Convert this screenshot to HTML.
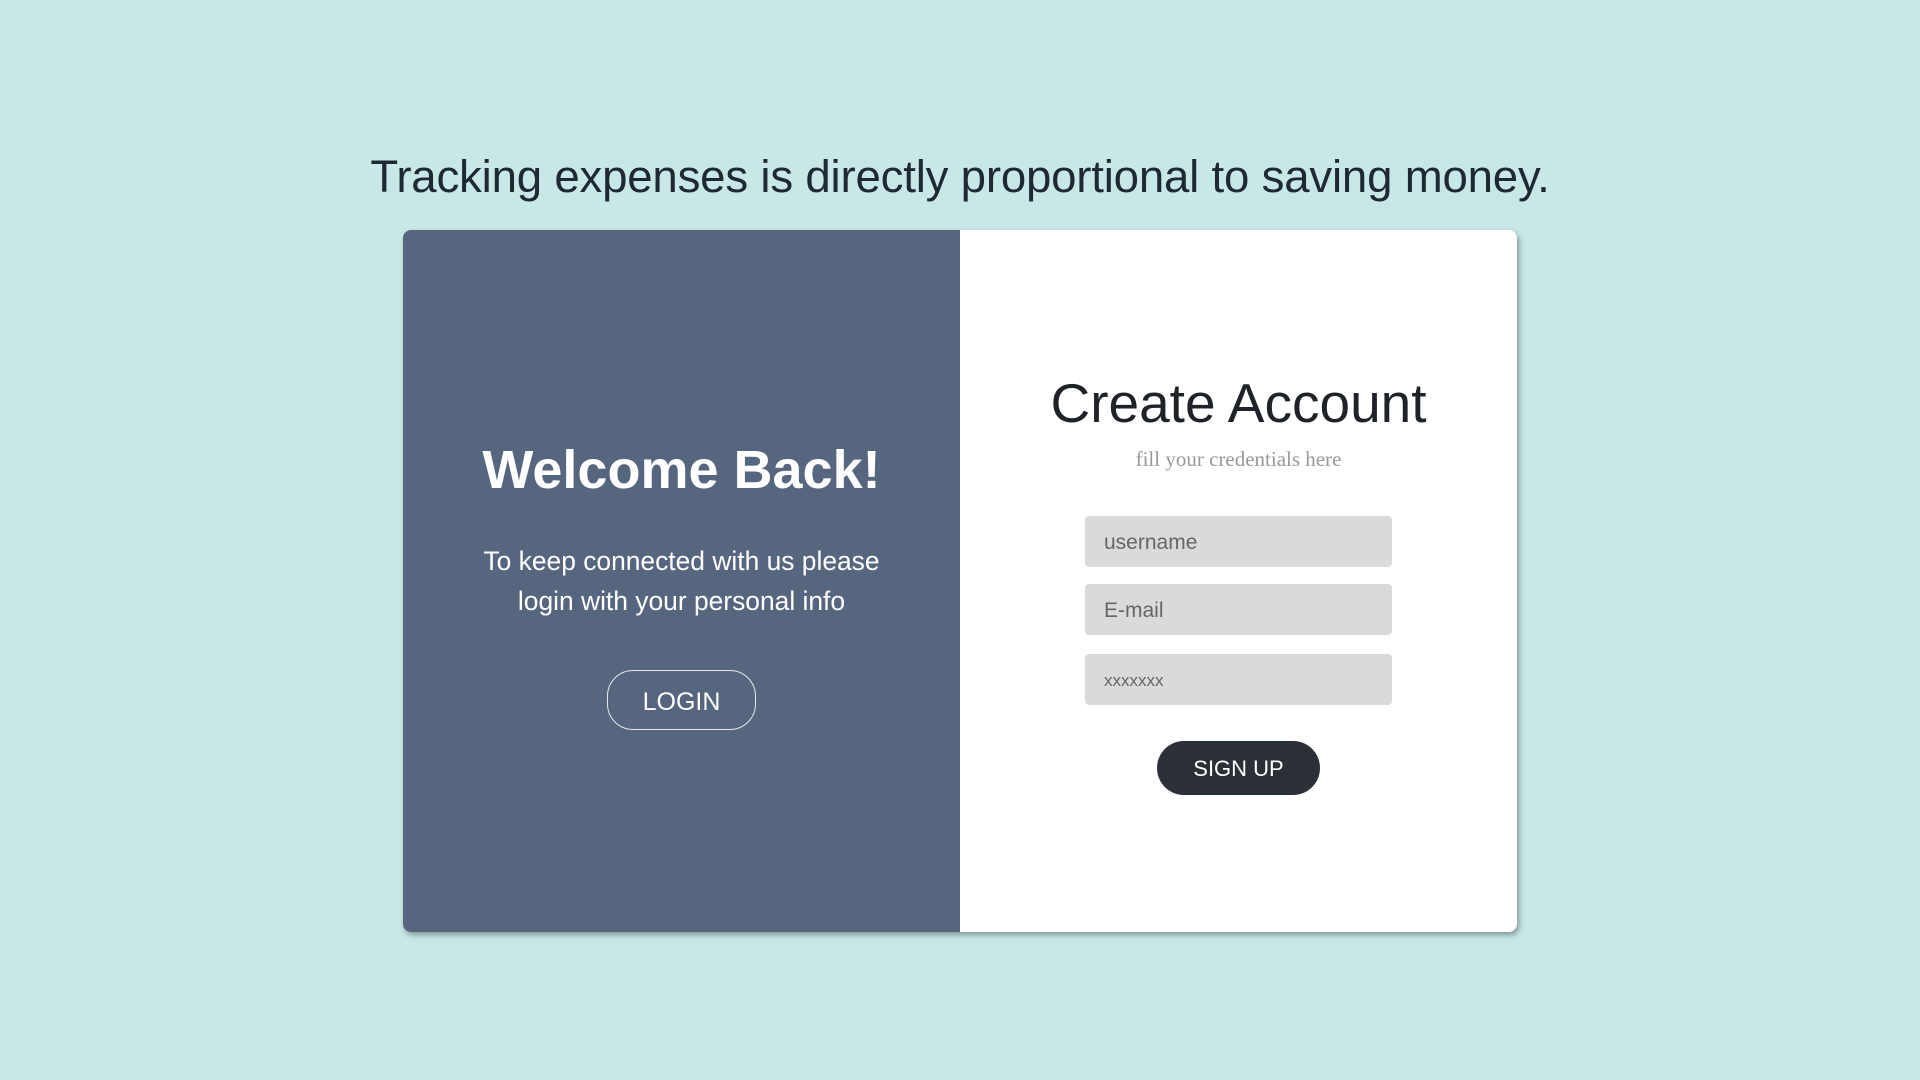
<!DOCTYPE html>
<html><head><meta charset="utf-8"><style>
html,body{margin:0;padding:0;width:1920px;height:1080px;background:#c8e8e8;font-family:"Liberation Sans","DejaVu Sans",sans-serif;overflow:hidden}
h1{position:absolute;top:150px;left:0;width:1920px;margin:0;text-align:center;font-size:45.6px;font-weight:normal;color:#1f2933;line-height:54px;letter-spacing:-0.2px}
.card{position:absolute;left:403px;top:230px;width:1114px;height:702px;border-radius:8px;background:#fff;box-shadow:2px 3px 6px rgba(0,0,0,0.35);overflow:hidden}
.left{position:absolute;left:0;top:0;width:557px;height:702px;background:#57667f;color:#fff;text-align:center}
.left h2{position:absolute;top:205px;left:0;width:557px;margin:0;font-size:54px;font-weight:bold;line-height:70px}
.left p{position:absolute;top:311px;left:0;width:557px;margin:0;font-size:26.4px;line-height:40px}
.login{position:absolute;left:204px;top:440px;width:147px;height:58px;border:1px solid #e6e8ee;border-radius:26px;font-size:25px;line-height:62px;color:#fff}
.right{position:absolute;left:557px;top:0;width:557px;height:702px;text-align:center}
.right h3{position:absolute;top:141px;left:0;width:557px;margin:0;font-size:55px;font-weight:normal;color:#1f2328;line-height:64px}
.sub{position:absolute;top:217px;left:0;width:557px;font-family:"Liberation Serif",serif;font-size:21px;color:#999}
.in{position:absolute;left:125px;width:307px;height:51px;background:#dadada;border-radius:4px;text-align:left;box-sizing:border-box;padding-left:19px;font-size:21px;line-height:53px;color:#666}
.btn{position:absolute;left:197px;top:511px;width:163px;height:54px;border-radius:27px;background:#2b2f36;color:#fff;font-size:22px;line-height:56px}
</style></head><body>
<h1>Tracking expenses is directly proportional to saving money.</h1>
<div class="card">
<div class="left">
<h2>Welcome Back!</h2>
<p>To keep connected with us please<br>login with your personal info</p>
<div class="login">LOGIN</div>
</div>
<div class="right">
<h3>Create Account</h3>
<div class="sub">fill your credentials here</div>
<div class="in" style="top:286px">username</div>
<div class="in" style="top:354px">E-mail</div>
<div class="in" style="top:424px;font-size:17px">xxxxxxx</div>
<div class="btn">SIGN UP</div>
</div>
</div>
</body></html>
